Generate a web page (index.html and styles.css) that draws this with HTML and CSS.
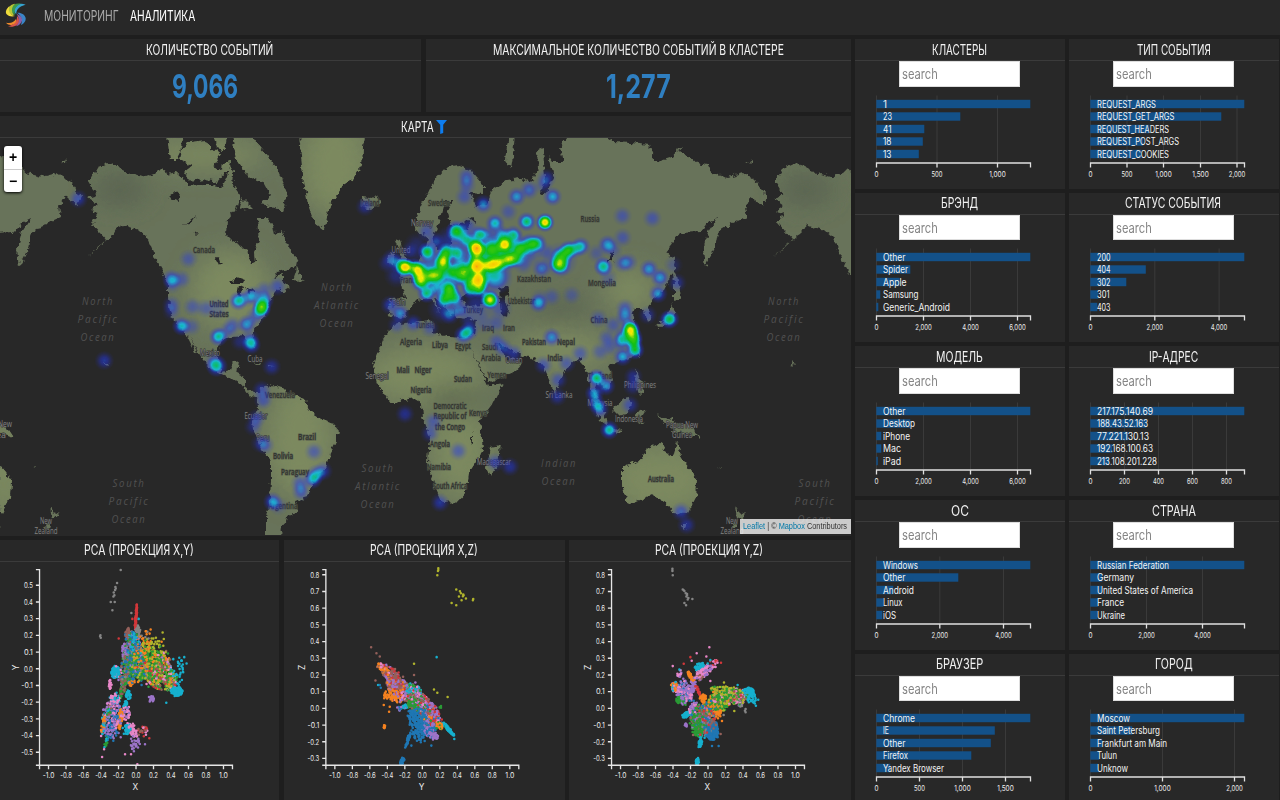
FILE: index.html
```html
<!DOCTYPE html>
<html lang="ru">
<head>
<meta charset="utf-8">
<title>Аналитика</title>
<link rel="stylesheet" href="styles.css">
</head>
<body>
<header class="topbar">
  <svg class="logo" width="22" height="26" viewBox="0 0 66 78" aria-hidden="true">
    <path d="M62 5C48 0 36 3 30 12c-5 8-3 16 4 22-1-14 8-24 28-29z" fill="#35a3cf"/>
    <path d="M48 2C34-1 22 5 19 15c-2 9 3 17 12 21C25 22 30 10 48 2z" fill="#3c9b4d"/>
    <path d="M31 2C18 3 10 12 10 21c0 9 8 15 19 17C18 27 18 12 31 2z" fill="#b6c835"/>
    <path d="M14 9C3 17 0 28 5 34c6 7 15 7 24 6C14 34 8 24 14 9z" fill="#f0dc3c"/>
    <path d="M36 29c14-1 24 6 26 16 1 9-5 17-14 21 5-14 3-27-12-37z" fill="#3b84c6"/>
    <path d="M35 33c12 4 18 12 16 20-2 8-9 14-18 17 9-12 11-24 2-37z" fill="#8a5fa6"/>
    <path d="M36 39c8 8 8 19 0 26-7 6-18 8-27 5 17-4 28-14 27-31z" fill="#d9534b"/>
    <path d="M33 48c2 9-3 15-11 17-7 2-14 0-19-6 13 3 23 0 30-11z" fill="#f08a2c"/>
  </svg>
  <nav class="nav">
    <a class="fit" data-w="75">МОНИТОРИНГ</a>
    <a class="fit current" data-w="65">АНАЛИТИКА</a>
  </nav>
</header>

<main class="board">
  <div class="left">
    <div class="row kpis">
      <section class="panel">
        <h2 class="head"><span class="fit" data-w="127">КОЛИЧЕСТВО СОБЫТИЙ</span></h2>
        <div class="kpi first"><span class="fit" data-w="66">9,066</span></div>
      </section>
      <section class="panel">
        <h2 class="head"><span class="fit" data-w="291">МАКСИМАЛЬНОЕ КОЛИЧЕСТВО СОБЫТИЙ В КЛАСТЕРЕ</span></h2>
        <div class="kpi"><span class="fit" data-w="65">1,277</span></div>
      </section>
    </div>

    <section class="panel map-panel">
      <h2 class="head map-head">
        <span class="fit" data-w="33">КАРТА</span>
        <svg class="funnel" width="11" height="14" viewBox="0 0 11 14"><path d="M0 0h11L7.2 4.8V13l-3 1V4.8z" fill="#0d7df0"/></svg>
      </h2>
      <div class="map">
        <svg class="world" width="851" height="397" viewBox="0 138 851 397">
          <defs>
            <filter id="coast" x="-5%" y="-5%" width="110%" height="110%">
              <feTurbulence type="fractalNoise" baseFrequency="0.2" numOctaves="2" seed="4"/>
              <feDisplacementMap in="SourceGraphic" scale="7" xChannelSelector="R" yChannelSelector="G"/>
            </filter>
            <filter id="soft" x="-50%" y="-50%" width="200%" height="200%"><feGaussianBlur stdDeviation="12"/></filter>
            <g id="land">
              <path d="M89 182L97 168 108 163 117 166 128 172 145 177 157 173 162 168 167 175 177 173 187 182 187 186 203 185 213 185 222 187 227 177 230 165 234 172 233 185 240 195 240 202 235 210 227 220 226 235 233 242 247 250 251 265 255 263 254 252 259 242 258 232 257 218 267 218 273 225 275 235 282 230 283 235 290 248 298 262 297 267 277 272 273 278 283 273 283 282 290 287 282 293 278 288 270 298 267 312 260 322 252 332 254 348 249 346 246 336 230 337 222 339 218 348 218 360 222 372 230 370 233 362 239 361 237 373 245 377 245 387 252 392 258 392 262 387 268 385 283 388 290 395 305 400 310 412 320 418 333 423 339 430 337 440 330 453 327 468 315 477 310 490 303 500 295 503 297 512 287 517 286 523 282 525 281 540 266 540 266 517 270 500 271 480 271 460 262 450 253 428 252 420 258 408 257 397 250 396 242 385 227 376 213 370 203 360 197 350 190 337 198 354 195 352 183 328 175 322 170 312 168 298 168 285 163 272 155 258 147 238 138 230 123 225 117 228 113 235 100 247 87 257 107 240 92 223 98 213 90 211 98 205 88 198 97 195Z"/>
              <path d="M167 134H183L180 152 176 160 170 160ZM182 148L190 142 205 140 212 150 221 153 213 165 225 173 217 182 202 179 190 181 184 172 192 166 180 160ZM213 134H227L225 150 217 148ZM232 134H250L264 152 277 168 287 193 283 212 274 207 261 204 270 195 263 182 248 176 236 158ZM242 198L252 208 240 210ZM223 163L230 160 228 172 222 172Z"/>
              <path d="M297 268L304 282 293 280ZM299 134H366L363 146 362 165 354 178 343 185 330 205 324 230 315 223 308 205 303 175ZM362 197L370 198 377 195 380 203 371 210 363 207ZM61 162L67 159 66 163Z"/>
              <path d="M457 165L470 170 483 185 483 193 469 192 477 207 487 204 493 190 507 180 520 178 532 182 538 168 537 150 543 148 545 178 540 195 547 192 553 178 548 155 553 162 563 162 560 147 570 134 600 134 613 142 630 143 650 145 654 163 670 158 677 150 690 157 697 163 708 165 712 173 728 177 743 173 757 182 767 197 763 205 750 197 745 207 747 217 733 223 718 232 715 248 705 267 703 250 708 232 717 218 707 223 700 232 680 233 665 252 675 258 673 272 663 292 653 298 648 308 652 320 647 322 643 308 635 308 632 315 638 335 640 347 633 357 617 362 608 365 613 380 607 390 598 383 595 390 603 408 592 392 587 373 580 358 567 368 558 383 555 395 550 383 543 367 537 360 517 353 498 343 506 358 523 362 517 370 489 383 473 353 470 347 488 386 503 383 493 403 480 420 483 450 468 473 465 493 457 502 442 503 435 487 428 463 430 437 423 417 422 403 413 398 390 403 377 383 373 367 383 340 393 325 412 322 432 320 433 332 447 337 463 338 475 334 477 320 460 318 453 313 456 306 451 316 445 306 433 295 440 312 430 298 417 300 408 312 402 318 388 315 390 298 405 297 400 275 417 263 427 248 430 232 437 250 450 248 453 232 467 230 468 223 450 225 447 212 453 200 445 200 438 225 432 240 425 235 415 232 417 217 433 182 447 167Z"/>
              <path d="M395 238L400 240 403 252 409 262 397 264 401 254ZM388 255L395 254 393 263 387 264ZM509 134H515L513 155 511 167 505 160ZM672 260L676 272 680 290 681 298 674 302 674 285ZM672 305L675 312 672 322 660 328 656 326 667 318ZM491 447L500 445 497 464 491 476 487 468ZM636 368L640 380 645 392 640 396 635 382ZM612 410L626 397 632 402 627 414 618 416ZM592 397L604 412 607 425 600 420ZM608 427L622 430 620 433 609 431ZM636 412L646 410 641 418 643 424 637 421ZM656 415L672 420 692 426 700 438 688 434 676 433ZM608 362L615 358 614 365ZM638 350L641 354 638 357Z"/>
              <path d="M648 448L660 443 665 446 663 452 673 457 677 442 683 462 692 472 697 480 696 497 688 513 673 512 665 502 653 495 640 500 627 504 623 487 623 467 640 460ZM682 524L687 524 684 530ZM736 506L739 512 745 514 738 520ZM734 520L737 526 730 532ZM252 362L262 364 261 366ZM267 366L275 367 268 368ZM104 362L109 364 107 366ZM33 466L36 469 35 469ZM677 149L681 146 678 152Z"/>
            </g>
            <g id="lakes">
              <path d="M168 198L176 191 180 193 178 202ZM184 225L195 216 190 224ZM214 258L218 256 221 265 217 263ZM230 284L237 277 245 280 243 284ZM239 286L243 288 241 298 237 297ZM245 287L254 290 250 295ZM194 233L199 232 196 235ZM463 224L467 220 470 226ZM470 219L473 217 476 224ZM461 300L468 291 482 293 489 298 484 305 468 306ZM499 287L508 285 510 294 504 296 509 308 508 317 501 316 500 303ZM606 263L613 250 613 260ZM470 438L473 432 473 444Z"/>
            </g>
            <mask id="landMask" maskUnits="userSpaceOnUse" x="0" y="130" width="851" height="420">
              <g fill="#fff"><use href="#land"/><use href="#land" x="-686"/><use href="#land" x="686"/></g>
            </mask>
          </defs>
          <rect x="0" y="138" width="851" height="397" fill="#282828"/>
          <g filter="url(#coast)">
            <g fill="#68735a"><use href="#land"/><use href="#land" x="-686"/><use href="#land" x="686"/></g>
            <g mask="url(#landMask)"><g filter="url(#soft)" fill="#7b895f">
              <ellipse cx="230" cy="290" rx="40" ry="40"/><ellipse cx="335" cy="165" rx="35" ry="50"/>
              <ellipse cx="300" cy="440" rx="34" ry="60"/><ellipse cx="425" cy="375" rx="60" ry="30"/>
              <ellipse cx="460" cy="450" rx="30" ry="50"/><ellipse cx="660" cy="480" rx="50" ry="36"/>
              <ellipse cx="560" cy="350" rx="50" ry="20"/><ellipse cx="630" cy="290" rx="26" ry="22"/>
              <ellipse cx="5" cy="470" rx="20" ry="50"/><ellipse cx="205" cy="155" rx="60" ry="14"/>
              <g fill="#58624f"><ellipse cx="120" cy="190" rx="26" ry="14"/><ellipse cx="806" cy="190" rx="26" ry="14"/><ellipse cx="560" cy="310" rx="30" ry="8"/><ellipse cx="455" cy="400" rx="26" ry="12"/></g>
            </g></g>
            <g fill="#282828"><use href="#lakes"/></g>
          </g>
          <g id="map-labels"></g>
        </svg>
        <canvas class="heat" id="heat" width="851" height="397"></canvas>
        <div class="zoom"><span>+</span><span>−</span></div>
        <div class="credit"><span class="fit" data-w="104"><a>Leaflet</a> | © <a>Mapbox</a> Contributors</span></div>
      </div>
    </section>

    <div class="row plots">
      <section class="panel">
        <h2 class="head"><span class="fit" data-w="110">PCA (ПРОЕКЦИЯ X,Y)</span></h2>
        <svg class="plot" id="plot-xy" width="279" height="239" viewBox="0 80 837 717"></svg>
      </section>
      <section class="panel">
        <h2 class="head"><span class="fit" data-w="108">PCA (ПРОЕКЦИЯ X,Z)</span></h2>
        <svg class="plot" id="plot-xz" width="279" height="239" viewBox="3 80 837 717"></svg>
      </section>
      <section class="panel">
        <h2 class="head"><span class="fit" data-w="108">PCA (ПРОЕКЦИЯ Y,Z)</span></h2>
        <svg class="plot" id="plot-yz" width="279" height="239" viewBox="6 80 837 717"></svg>
      </section>
    </div>
  </div>
  <div class="facets" id="facets"></div>
</main>
<script src="app.js"></script>
</body>
</html>
```
FILE: styles.css
```css
* { box-sizing: border-box; }
body {
  margin: 0;
  width: 1280px;
  height: 800px;
  overflow: hidden;
  background: #1e1e1e;
  color: #f0f0f0;
  font-family: Inter, "Open Sans", sans-serif;
}
.fit { display: inline-block; white-space: nowrap; transform-origin: 0 50%; }
.topbar { display: flex; align-items: center; height: 35px; padding: 0 0 4px 5px; background: #282828; }
.logo { flex: none; }
.nav { display: flex; gap: 11px; margin-left: 17px; font-size: 14px; line-height: 16px; color: #aaa; }
.nav .current { color: #fff; }

.board { display: flex; gap: 4px; padding-top: 4px; }
.left { display: grid; grid-template-rows: 73px 419.5px 260.5px; gap: 4px; width: 851px; }
.row { display: grid; }
.kpis { grid-template-columns: 421px 425px; gap: 5px; }
.plots { grid-template-columns: 279px 281px 282px; gap: 4.5px; }
.panel { display: flex; flex-direction: column; align-items: center; min-width: 0; overflow: hidden; background: #282828; }
.head {
  display: flex;
  flex: none;
  align-items: center;
  justify-content: center;
  gap: 3px;
  width: 100%;
  height: 22px;
  margin: 0;
  padding-right: 1px;
  border-bottom: 1px solid #3b3b3b;
  font-size: 14px;
  line-height: 20px;
  font-weight: 400;
  color: #f2f2f2;
}
.map-head { padding-right: 3px; }
.kpi { display: flex; align-items: center; height: 52px; color: #2f7fc1; font-size: 32.5px; font-weight: 700; line-height: 40px; }
.kpi.first { padding-right: 11px; }

.map { position: relative; width: 851px; height: 397px; overflow: hidden; }
.world, .plot { display: block; }
.plot { align-self: flex-start; }
.heat { position: absolute; left: 0; top: 0; }
.zoom {
  position: absolute;
  left: 4px;
  top: 8px;
  width: 18px;
  height: 46px;
  border-radius: 3px;
  background: #fff;
  box-shadow: 0 1px 3px #000;
  color: #000;
  font: bold 14px/22px "Liberation Sans", sans-serif;
  text-align: center;
}
.zoom span { display: block; height: 23px; }
.zoom span + span { border-top: 1px solid #ccc; }
.credit {
  position: absolute;
  right: 0;
  bottom: 1px;
  height: 15px;
  padding: 0 4px 0 3px;
  background: rgba(255, 255, 255, .76);
  color: #333;
  font: 9px/14px "Liberation Sans", sans-serif;
}
.credit a { color: #0078a8; }
.ocean { font: italic 11.5px "Open Sans", sans-serif; fill: #515151; letter-spacing: 2px; text-anchor: middle; }
.country {
  font: 600 8.6px "Open Sans", sans-serif;
  fill: #33362f;
  stroke: #565c4e;
  stroke-width: 1.2px;
  paint-order: stroke;
  text-anchor: middle;
}
.country.sea { font-weight: 400; fill: #828282; stroke: #2c2c2c; }

.axis { fill: none; stroke: #e6e6e6; stroke-width: 4; }
.tick { font-size: 23px; fill: #eee; }
.axis-name { font-size: 25px; fill: #eee; text-anchor: middle; }
.dots { fill: none; stroke-width: 7.6; stroke-linecap: round; }

.facets { display: grid; grid-template-columns: 210px 210px; grid-auto-rows: 149.7px; gap: 4px; width: 424px; }
.search {
  flex: none;
  width: 121px;
  height: 25.5px;
  margin-right: 2px;
  padding: 0 2px;
  border: 1px solid #ddd;
  background: #fff;
  color: #858585;
  font-size: 14px;
  line-height: 24px;
}
.chart { display: block; align-self: flex-start; }
.bar { fill: #135189; }
.grid-line { stroke: #3a3a3a; stroke-width: 1; }
.chart-axis { fill: none; stroke: #e0e0e0; stroke-width: 1.3; }
.bar-label { font-size: 9.8px; fill: #f4f4f4; }
.chart-tick { font-size: 7.8px; fill: #eee; }
```
FILE: app.js
```js
const NS = 'http://www.w3.org/2000/svg';
function add(parent, name, attrs, text) {
  const el = document.createElementNS(NS, name);
  for (const k in attrs) el.setAttribute(k, attrs[k]);
  if (text !== undefined) el.textContent = text;
  parent.appendChild(el);
  return el;
}
let seed = 7;
function rnd() {
  seed = (seed * 1664525 + 1013904223) % 4294967296;
  return seed / 4294967296;
}

/* Facet charts: title, title width, [label, label width, bar length], [tick, position] */
const facets = [
  ['КЛАСТЕРЫ', 55, [['1', 4, 154], ['23', 9, 84], ['41', 8.5, 48], ['18', 8.5, 46.5], ['13', 8.5, 42.5]], [['0', 0], ['500', 60.5], ['1,000', 121]]],
  ['ТИП СОБЫТИЯ', 74, [['REQUEST_ARGS', 59, 154], ['REQUEST_GET_ARGS', 77.5, 131], ['REQUEST_HEADERS', 72, 59], ['REQUEST_POST_ARGS', 82, 53], ['REQUEST_COOKIES', 72, 51]], [['0', 0], ['500', 36.5], ['1,000', 73], ['1,500', 110], ['2,000', 146.5]]],
  ['БРЭНД', 37, [['Other', 22.5, 154], ['Spider', 25, 34], ['Apple', 23.5, 23], ['Samsung', 35.5, 4], ['Generic_Android', 67, 2]], [['0', 0], ['2,000', 47], ['4,000', 94], ['6,000', 141]]],
  ['СТАТУС СОБЫТИЯ', 96, [['200', 13.5, 154], ['404', 13.5, 55.5], ['302', 13.5, 36], ['301', 12.5, 8], ['403', 13.5, 7]], [['0', 0], ['2,000', 64.3], ['4,000', 128.6]]],
  ['МОДЕЛЬ', 47, [['Other', 22.5, 154], ['Desktop', 32, 34], ['iPhone', 27, 5], ['Mac', 18, 5], ['iPad', 18, 1.5]], [['0', 0], ['2,000', 47], ['4,000', 94], ['6,000', 141]]],
  ['IP-АДРЕС', 49, [['217.175.140.69', 56, 154], ['188.43.52.163', 51, 56], ['77.221.130.13', 52, 38], ['192.168.100.63', 56, 22], ['213.108.201.228', 60, 19]], [['0', 0], ['200', 34], ['400', 68], ['600', 102], ['800', 136]]],
  ['ОС', 18, [['Windows', 35, 154], ['Other', 22.5, 82], ['Android', 31, 17], ['Linux', 19.5, 7], ['iOS', 13, 6]], [['0', 0], ['2,000', 63.3], ['4,000', 127]]],
  ['СТРАНА', 44, [['Russian Federation', 72, 154], ['Germany', 37, 12], ['United States of America', 96, 12], ['France', 27, 8], ['Ukraine', 28, 7]], [['0', 0], ['2,000', 56], ['4,000', 112]]],
  ['БРАУЗЕР', 47, [['Chrome', 32, 154], ['IE', 6, 118.5], ['Other', 22.5, 114.5], ['Firefox', 25, 95], ['Yandex Browser', 61, 14]], [['0', 0], ['500', 43], ['1,000', 86], ['1,500', 129]]],
  ['ГОРОД', 38, [['Moscow', 33, 154], ['Saint Petersburg', 63, 42], ['Frankfurt am Main', 70, 12], ['Tulun', 20, 9], ['Unknow', 31, 8]], [['0', 0], ['1,000', 72], ['2,000', 144]]]
];
const box = document.getElementById('facets');
for (const [title, width, bars, ticks] of facets) {
  const panel = document.createElement('section');
  panel.className = 'panel';
  panel.innerHTML = `<h2 class="head"><span class="fit" data-w="${width}">${title}</span></h2>
    <div class="search"><span class="fit" data-w="36">search</span></div>`;
  const svg = add(panel, 'svg', { class: 'chart', width: 209, height: 100, viewBox: '0 -0.5 209 100' });
  for (const [, p] of ticks) add(svg, 'path', { class: 'grid-line', d: `M${21.5 + p} 8V75` });
  bars.forEach(([label, w, len], i) => {
    const y = 16.5 + i * 12.5;
    add(svg, 'rect', { class: 'bar', x: 21.3, y: y - 4.2, width: len, height: 8.4 });
    add(svg, 'text', { class: 'bar-label', x: 28, y: y + 3.7, textLength: w, lengthAdjust: 'spacingAndGlyphs' }, label);
  });
  add(svg, 'path', { class: 'chart-axis', d: 'M21.5 80V75.5H175.5V80' + ticks.map(t => `M${21.5 + t[1]} 75V80`).join('') });
  for (const [t, p] of ticks) {
    const w = t.length === 1 ? 4 : t.length === 3 ? 11 : 16.5;
    add(svg, 'text', { class: 'chart-tick', x: 21.5 + p - w / 2, y: 89, textLength: w, lengthAdjust: 'spacingAndGlyphs' }, t);
  }
  box.appendChild(panel);
}

/* Map labels */
const labels = document.getElementById('map-labels');
const oceans = [
  [97, 305, 'North', 'Pacific', 'Ocean'], [783, 305, 'North', 'Pacific', 'Ocean'],
  [336, 291, 'North', 'Atlantic', 'Ocean'], [128, 487, 'South', 'Pacific', 'Ocean'],
  [814, 487, 'South', 'Pacific', 'Ocean'], [377, 472, 'South', 'Atlantic', 'Ocean'],
  [558, 467, 'Indian', 'Ocean']
];
const oceanWidth = { North: 32, South: 33, Pacific: 41, Atlantic: 46, Ocean: 35, Indian: 36 };
for (const [x, y, ...lines] of oceans) {
  lines.forEach((t, i) => {
    add(labels, 'text', { class: 'ocean', x: x + 1, y: y + i * 18, textLength: oceanWidth[t], lengthAdjust: 'spacingAndGlyphs' }, t);
  });
}
const places = [
  [204, 253, 'Canada', 22], [219, 307, 'United', 19], [219, 317, 'States', 19], [210, 356, 'Mexico', 20, 1], [255, 362, 'Cuba', 15, 1],
  [280, 398, 'Venezuela', 30], [256, 419, 'Ecuador', 23, 1], [263, 441, 'Peru', 13, 1], [307, 440, 'Brazil', 18], [283, 459, 'Bolivia', 20],
  [295, 475, 'Paraguay', 28], [283, 509, 'Argentina', 29], [370, 206, 'Iceland', 19], [439, 206, 'Sweden', 22], [422, 226, 'Norway', 22, 1],
  [401, 253, 'United', 19, 1], [409, 283, 'France', 18], [397, 305, 'Spain', 17, 1], [425, 328, 'Tunisia', 19], [473, 313, 'Turkey', 20],
  [488, 331, 'Iraq', 12], [509, 331, 'Iran', 12], [534, 282, 'Kazakhstan', 34], [522, 304, 'Uzbekistan', 28], [590, 222, 'Russia', 19],
  [602, 286, 'Mongolia', 28], [599, 323, 'China', 17], [411, 345, 'Algeria', 22], [440, 348, 'Libya', 16], [463, 349, 'Egypt', 16],
  [490, 350, 'Saudi', 16], [491, 361, 'Arabia', 20], [514, 363, 'Oman', 17, 1], [534, 345, 'Pakistan', 24], [566, 345, 'Nepal', 18],
  [555, 361, 'India', 15], [497, 378, 'Yemen', 19], [403, 373, 'Mali', 13], [423, 373, 'Niger', 17], [377, 379, 'Senegal', 23, 1],
  [463, 382, 'Sudan', 18], [421, 393, 'Nigeria', 21], [450, 409, 'Democratic', 33], [450, 419, 'Republic of', 33], [450, 430, 'the Congo', 30],
  [478, 416, 'Kenya', 18], [440, 447, 'Angola', 20], [439, 470, 'Namibia', 24], [450, 489, 'South Africa', 34], [494, 465, 'Madagascar', 34, 1],
  [559, 398, 'Sri Lanka', 27, 1], [600, 379, 'Thailand', 24], [640, 388, 'Philippines', 32, 1], [600, 406, 'Malaysia', 25, 1],
  [629, 422, 'Indonesia', 28, 1], [682, 428, 'Papua New', 32, 1], [682, 438, 'Guinea', 20, 1], [661, 482, 'Australia', 26],
  [46, 524, 'New', 12, 1], [46, 534, 'Zealand', 23, 1], [732, 524, 'New', 12, 1], [732, 534, 'Zealand', 23, 1], [5, 427, 'New', 14, 1], [1, 438, 'ea', 10, 1]
];
for (const [x, y, t, w, sea] of places) {
  add(labels, 'text', { class: sea ? 'country sea' : 'country', x: x, y: y, textLength: w, lengthAdjust: 'spacingAndGlyphs' }, t);
}

/* Heat layer: each group has an origin and points in thirds of a pixel: x, y, strength, radius */
const heatGroups = [
  [350, 135, [
    [165, 397, .85], [165, 397, .6], [205, 405, .8], [190, 398, .6], [380, 340, .9], [380, 340, .7], [380, 365, .6], [380, 395, .9, 36], [380, 395, .6], [385, 435, .9, 36], [385, 430, .6], [388, 460, .75],
    [420, 495, .85], [420, 490, .4], [430, 388, .85], [410, 392, .7], [450, 382, .75], [475, 373, .75], [465, 328, .8], [465, 328, .4], [585, 262, .85], [585, 262, .6, 24], [280, 375, .8], [278, 392, .6], [345, 410, .75], [360, 440, .65], [360, 462, .6],
    [415, 345, .5, 40], [320, 288, .7, 34], [345, 310, .5], [365, 325, .45], [388, 300, .6], [232, 350, .65], [213, 440, .75], [208, 422, .6], [230, 475, .6],
    [240, 422, .65], [262, 420, .65], [288, 352, .65], [320, 355, .55], [308, 410, .6], [332, 425, .6], [297, 462, .72], [284, 490, .65], [315, 490, .55], [305, 478, .3],
    [435, 340, .55, 40], [490, 300, .55], [455, 300, .45], [435, 265, .52], [495, 370, .6], [510, 342, .6], [540, 328, .62, 34], [562, 325, .55], [530, 260, .62],
    [635, 365, .62, 34], [655, 345, .65], [625, 388, .68], [635, 395, .4], [675, 342, .35], [693, 334, .48], [500, 185, .42], [537, 165, .33], [608, 185, .45], [400, 208, .4],
    [475, 230, .22], [350, 125, .28], [350, 150, .25], [343, 185, .25], [575, 400, .36], [565, 505, .42], [570, 490, .15], [605, 485, .2], [605, 607, .4],
    [665, 480, .18], [760, 395, .32], [770, 330, .22], [740, 355, .18], [150, 535, .4], [120, 510, .3], [125, 370, .26], [110, 385, .18], [45, 215, .24], [230, 290, .25],
    [190, 565, .3], [140, 570, .2], [240, 580, .2], [357, 588, .45], [340, 600, .45], [330, 525, .35], [300, 540, .3], [355, 555, .18], [440, 565, .2], [745, 550, .2],
    [590, 130, .28], [580, 150, .2], [260, 460, .35], [180, 350, .2], [330, 390, .4], [355, 275, .25], [415, 300, .3], [520, 390, .2], [585, 350, .2],
    [300, 320, .25, 50], [290, 430, .3, 60], [380, 510, .22, 50], [440, 430, .35, 50], [450, 520, .22, 40], [420, 400, .4, 70], [280, 520, .25, 50], [200, 330, .15, 40], [400, 560, .15, 40], [475, 345, .45, 65], [370, 370, .3, 70], [140, 420, .2, 40], [250, 400, .35, 70], [255, 320, .3], [145, 385, .35], [530, 350, .3, 50], [630, 375, .3, 55], [220, 430, .3, 50]
  ]],
  [0, 135, [
    [235, 192, .28], [565, 372, .22], [515, 432, .4], [517, 448, .18], [545, 433, .22], [515, 510, .24], [515, 530, .16], [545, 573, .5], [575, 575, .18], [578, 515, .22], [615, 520, .2],
    [715, 498, .56], [740, 488, .25], [760, 482, .38], [785, 515, .65], [783, 525, .55], [793, 495, .45], [792, 465, .22], [740, 568, .42], [765, 545, .25], [697, 572, .26], [680, 590, .2],
    [655, 605, .56], [750, 612, .25], [755, 630, .25], [832, 455, .26], [650, 520, .13, 40]
  ]],
  [0, 340, [
    [313, 62, .28], [650, 78, .55, 34], [640, 66, .2], [753, 12, .28], [815, 80, .26], [785, 150, .26], [790, 180, .26], [770, 235, .24], [760, 260, .2], [795, 315, .26], [780, 310, .18],
    [942, 335, .24], [938, 418, .45], [950, 402, .36], [970, 393, .28], [900, 430, .26], [903, 455, .3], [818, 485, .42], [835, 498, .16], [720, 5, .18]
  ]],
  [600, 135, [
    [67, 243, .24], [157, 250, .25], [68, 308, .24], [25, 328, .26], [40, 345, .18], [10, 395, .38], [68, 385, .26], [85, 382, .26], [147, 402, .42], [180, 428, .42],
    [174, 476, .42], [231, 443, .24], [220, 390, .15], [210, 552, .58], [200, 556, .2], [143, 540, .24], [90, 580, .75], [93, 590, .7], [100, 608, .6], [75, 545, .35], [70, 605, .38],
    [40, 570, .22], [75, 520, .28], [20, 610, .22], [25, 430, .15]
  ]],
  [350, 340, [
    [855, 30, .65], [850, 5, .5], [818, 50, .45], [815, 5, .38], [780, 20, .2], [750, 35, .2], [740, 115, .62], [768, 138, .42], [733, 160, .44], [738, 190, .36], [750, 207, .38], [778, 270, .56],
    [850, 110, .24], [848, 140, .2], [840, 195, .26], [690, 40, .24], [650, 70, .24], [580, 75, .26], [625, 120, .24], [622, 170, .25], [490, 40, .26], [460, 25, .3],
    [440, 5, .24], [165, 222, .25], [250, 245, .24], [240, 280, .24], [325, 333, .25], [270, 488, .28], [435, 367, .25], [480, 380, .26], [993, 515, .3], [1010, 555, .26]
  ]]
];
const canvas = document.getElementById('heat');
const ctx = canvas.getContext('2d');
for (const [ox, oy, pts] of heatGroups) {
  for (const [px, py, a, r = 30] of pts) {
    const x = ox + px / 3, y = oy + py / 3 - 138, rad = r / 3;
    const g = ctx.createRadialGradient(x, y, 0, x, y, rad);
    g.addColorStop(0, `rgba(0,0,0,${a})`);
    g.addColorStop(.35, `rgba(0,0,0,${a * .78})`);
    g.addColorStop(.7, `rgba(0,0,0,${a * .28})`);
    g.addColorStop(1, 'rgba(0,0,0,0)');
    ctx.fillStyle = g;
    ctx.fillRect(x - rad, y - rad, rad * 2, rad * 2);
  }
}
const stops = [[0, 40, 50, 225], [.24, 35, 55, 235], [.44, 20, 185, 225], [.58, 10, 190, 110], [.66, 15, 195, 20], [.78, 60, 205, 10], [.87, 250, 240, 0], [.95, 255, 200, 0], [.99, 255, 140, 15], [1, 255, 125, 15]];
const img = ctx.getImageData(0, 0, 851, 397);
for (let i = 0; i < img.data.length; i += 4) {
  const v = img.data[i + 3] / 255;
  if (!v) continue;
  let k = 1;
  while (k < stops.length - 1 && stops[k][0] < v) k++;
  const a = stops[k - 1], b = stops[k], t = Math.min(1, (v - a[0]) / (b[0] - a[0]));
  for (let c = 0; c < 3; c++) img.data[i + c] = a[c + 1] + (b[c + 1] - a[c + 1]) * t;
  img.data[i + 3] = Math.min(1, v * 2.1) * 245;
}
ctx.putImageData(img, 0, 0);

/* Scatter plots */
const C = { b: '#1f77b4', o: '#f58220', g: '#2a9a35', r: '#d2373a', p: '#9c74c8', w: '#94605a', k: '#e887c8', y: '#858585', l: '#b0b42c', c: '#16b0ce' };
function plot(id, o) {
  const svg = document.getElementById(id);
  // Clusters are tilted ellipses: cx, cy, rx, ry, angle, colours, count
  for (let pass = 0; pass < 8; pass++) {
    for (const [cx, cy, rx, ry, ang, cols, n] of o.clusters) {
      const paths = {};
      for (let i = pass; i < n; i += 8) {
        const q = Math.pow(rnd(), .55) * (rnd() < .12 ? 1.2 : 1), t = rnd() * 6.2832, s = Math.sin(ang * Math.PI / 180), c = Math.cos(ang * Math.PI / 180);
        const u = rx * q * Math.cos(t), v = ry * q * Math.sin(t);
        const col = cols[Math.floor(rnd() * cols.length)];
        paths[col] = (paths[col] || '') + `M${(cx + u * c - v * s).toFixed(1)} ${(cy + u * s + v * c).toFixed(1)}h.1`;
      }
      for (const col in paths) add(svg, 'path', { class: 'dots', stroke: C[col], d: paths[col] });
    }
  }
  for (const [col, ...p] of o.dots) {
    let d = '';
    for (let i = 0; i < p.length; i += 2) d += `M${p[i]} ${p[i + 1]}h.1`;
    add(svg, 'path', { class: 'dots', stroke: C[col], d });
  }
  const x0 = o.left, x1 = x0 + 580;
  let d = `M${x0 - 11} 103H${x0}V691M${x0 - 11} 691H${x1}V703M${x0} 691V703`;
  for (let i = 0; i <= 10; i++) {
    const x = x0 + 27 + i * 52.6, v = ((i - 5) / 5).toFixed(1), w = v[0] === '-' ? 35 : 27;
    d += `M${x} 691V703`;
    add(svg, 'text', { class: 'tick', x: x - w / 2, y: 730, textLength: w, lengthAdjust: 'spacingAndGlyphs' }, v);
  }
  for (let v = o.max; v >= o.min; v--) {
    const y = o.zero - v * 50.2, w = v < 0 ? 35 : 27;
    d += `M${x0 - 11} ${y}H${x0}`;
    add(svg, 'text', { class: 'tick', x: x0 - 20 - w, y: y + 8.5, textLength: w, lengthAdjust: 'spacingAndGlyphs' }, (v / 10).toFixed(1));
  }
  add(svg, 'path', { class: 'axis', d });
  add(svg, 'text', { class: 'axis-name', x: x0 + 288, y: 765 }, o.xName);
  add(svg, 'text', { class: 'axis-name', transform: `translate(${x0 - 62} 397) rotate(-90)` }, o.yName);
}
plot('plot-xy', {
  left: 118, zero: 401, max: 5, min: -5, xName: 'X', yName: 'Y',
  clusters: [
    [385, 375, 20, 82, 12, 'bbgypw', 230], [400, 355, 26, 66, -6, 'bcbgp', 180], [408, 400, 38, 48, 0, 'bbbgy', 210],
    [450, 395, 60, 52, 20, 'gggllo', 330], [485, 430, 46, 36, 20, 'grlwkg', 230], [432, 320, 24, 34, 10, 'oooly', 60], [465, 345, 33, 38, 0, 'llg', 50],
    [490, 378, 25, 35, 0, 'kpwl', 50], [420, 370, 22, 36, 0, 'oogr', 70], [375, 430, 9, 58, 12, 'ggw', 90], [398, 325, 10, 35, 0, 'ccb', 60], [383, 296, 8, 15, 0, 'w', 26], [413, 282, 8, 11, 0, 'y', 22],
    [408, 245, 2, 38, 4, 'r', 60], [346, 412, 12, 18, 8, 'c', 90], [352, 408, 16, 24, 10, 'kc', 20], [530, 468, 18, 14, 10, 'c', 90], [535, 420, 16, 46, 10, 'c', 32], [512, 428, 12, 28, 0, 'olc', 30],
    [330, 448, 5, 13, 0, 'k', 16], [385, 480, 8, 14, 0, 'c', 30], [376, 510, 7, 12, 0, 'c', 14], [345, 492, 16, 17, 0, 'kkc', 50], [340, 540, 27, 46, 0, 'ppkb', 160], [332, 590, 20, 26, 0, 'pb', 60],
    [310, 565, 7, 34, 8, 'ocoy', 55], [326, 530, 7, 22, 10, 'cgw', 30], [360, 550, 7, 32, 8, 'oo', 50], [375, 535, 14, 22, 0, 'kkp', 40], [378, 582, 15, 16, 0, 'cc', 30], [398, 585, 12, 26, -20, 'kk', 45],
    [406, 625, 14, 26, 0, 'pp', 28], [428, 590, 15, 18, 0, 'kwr', 20], [453, 490, 9, 11, 0, 'p', 20], [320, 618, 5, 18, 20, 'gc', 16], [372, 345, 7, 20, 0, 'p', 26], [395, 443, 18, 10, 0, 'oo', 14]
  ],
  dots: [['y', 362, 104, 351, 143, 346, 155, 345, 164, 341, 172, 340, 184, 343, 180, 347, 160, 332, 200, 344, 200, 337, 225, 301, 300, 302, 308, 300, 303, 394, 233],
    ['c', 416, 251, 553, 366, 538, 368, 560, 385, 534, 380, 520, 372, 499, 503, 548, 398], ['r', 397, 251, 356, 310, 448, 610, 404, 270], ['o', 452, 283, 485, 320, 437, 288], ['l', 488, 292, 490, 332, 478, 318, 460, 310],
    ['k', 312, 643, 306, 666, 375, 658, 393, 658, 412, 688, 303, 603, 430, 578], ['p', 435, 628, 362, 607], ['g', 504, 355]]
});
plot('plot-xz', {
  left: 128, zero: 520, max: 8, min: -3, xName: 'Y', yName: 'Z',
  clusters: [
    [335, 432, 62, 20, 45, 'wwrpw', 190], [302, 402, 24, 10, 45, 'oook', 60], [350, 460, 56, 22, 42, 'prwow', 150], [325, 480, 22, 18, 0, 'oo', 60], [350, 485, 20, 18, 0, 'oopk', 40], [330, 450, 20, 18, 0, 'ppo', 50],
    [400, 500, 36, 26, 45, 'gggkw', 180], [425, 510, 62, 20, 52, 'ppkwr', 240], [440, 545, 40, 26, 50, 'grobp', 160], [405, 545, 28, 36, 0, 'bbb', 170], [410, 590, 18, 30, 15, 'bb', 90], [440, 580, 20, 28, -10, 'ppb', 120],
    [456, 605, 9, 12, 0, 'pp', 20], [395, 460, 24, 10, 30, 'gkc', 50], [376, 465, 12, 10, 30, 'cc', 30], [366, 514, 8, 7, 0, 'c', 22], [468, 572, 11, 13, 0, 'oog', 36], [455, 530, 12, 28, -20, 'ppr', 40],
    [497, 583, 26, 4, 50, 'c', 90], [492, 578, 22, 3, 50, 'cg', 20], [376, 610, 3, 26, 18, 'b', 34], [357, 680, 5, 11, 20, 'b', 36], [304, 574, 2, 6, 0, 'o', 12], [390, 505, 11, 15, 20, 'g', 50], [355, 520, 14, 8, 0, 'pb', 14]
  ],
  dots: [['l', 466, 99, 466, 104, 465, 107, 463, 120, 520, 163, 531, 168, 534, 174, 541, 178, 540, 183, 528, 184, 549, 190, 536, 195, 571, 191, 570, 195, 506, 203, 520, 210, 393, 386, 453, 463, 463, 473, 494, 486, 542, 180],
    ['c', 461, 366, 514, 612, 285, 450], ['w', 264, 336, 280, 354, 290, 364, 277, 436, 393, 420, 360, 425], ['b', 290, 450, 293, 458, 445, 632, 385, 632, 425, 618], ['o', 320, 515, 318, 530, 302, 510, 312, 490], ['g', 474, 513, 474, 518, 470, 517], ['p', 397, 442]]
});
plot('plot-yz', {
  left: 133, zero: 520, max: 8, min: -3, xName: 'X', yName: 'Z',
  clusters: [
    [405, 412, 28, 9, -45, 'kk', 50], [420, 405, 22, 13, -40, 'kpp', 45], [397, 395, 14, 12, -30, 'cc', 36], [400, 420, 18, 14, -40, 'pkw', 26], [445, 385, 9, 11, 0, 'kkr', 14], [338, 415, 7, 10, 0, 'kp', 14],
    [325, 455, 12, 16, 0, 'okc', 50], [350, 465, 20, 30, 0, 'ppkb', 130], [372, 425, 5, 18, -30, 'oo', 34], [378, 450, 9, 24, 10, 'pp', 36], [335, 492, 7, 14, 0, 'gg', 22], [350, 500, 9, 14, 0, 'pg', 18],
    [392, 465, 3, 18, -25, 'r', 26], [365, 485, 12, 16, 0, 'kpb', 26], [360, 538, 16, 7, -30, 'cc', 80], [378, 520, 11, 18, 30, 'kpp', 60], [400, 545, 30, 38, 0, 'ggwpb', 240], [395, 580, 18, 24, 0, 'gg', 140],
    [420, 555, 25, 42, 0, 'rwbby', 210], [437, 590, 18, 26, 0, 'bbb', 140], [440, 575, 12, 16, 0, 'wwb', 50], [430, 520, 28, 22, 0, 'oogb', 110], [408, 490, 11, 12, 0, 'oo', 36], [455, 500, 32, 28, 0, 'gggol', 190],
    [485, 485, 50, 24, -8, 'gglkw', 240], [470, 468, 38, 14, 0, 'llg', 80], [515, 485, 24, 22, 0, 'krlwg', 110], [545, 475, 17, 18, 20, 'cc', 90], [556, 490, 16, 18, 0, 'c', 22], [455, 535, 9, 14, 10, 'oo', 26],
    [520, 505, 11, 12, 0, 'yyp', 14], [400, 622, 5, 18, 10, 'c', 36], [391, 680, 5, 11, 0, 'c', 40], [356, 572, 3, 7, 0, 'p', 10], [405, 600, 11, 12, 0, 'gcr', 18]
  ],
  dots: [['y', 316, 100, 316, 105, 316, 107, 317, 120, 347, 163, 352, 167, 356, 174, 360, 180, 358, 184, 364, 188, 362, 193, 376, 191, 352, 203, 357, 210, 536, 522, 536, 532, 470, 540, 534, 527, 350, 165, 360, 176],
    ['k', 427, 336, 389, 354, 418, 364, 374, 377, 317, 393, 430, 438], ['r', 370, 366, 350, 386, 462, 383, 430, 378], ['c', 430, 375, 337, 403, 512, 450, 574, 494, 567, 512, 422, 385], ['l', 471, 442, 502, 528, 432, 460],
    ['b', 435, 633, 455, 633, 380, 497], ['w', 461, 597, 378, 600], ['o', 465, 558, 453, 550], ['g', 443, 455]]
});

/* Squeeze text runs to their set width */
for (const el of document.querySelectorAll('.fit')) {
  const w = +el.dataset.w, natural = el.offsetWidth;
  el.style.transform = `scaleX(${w / natural})`;
  el.style.marginRight = `${w - natural}px`;
}
```
